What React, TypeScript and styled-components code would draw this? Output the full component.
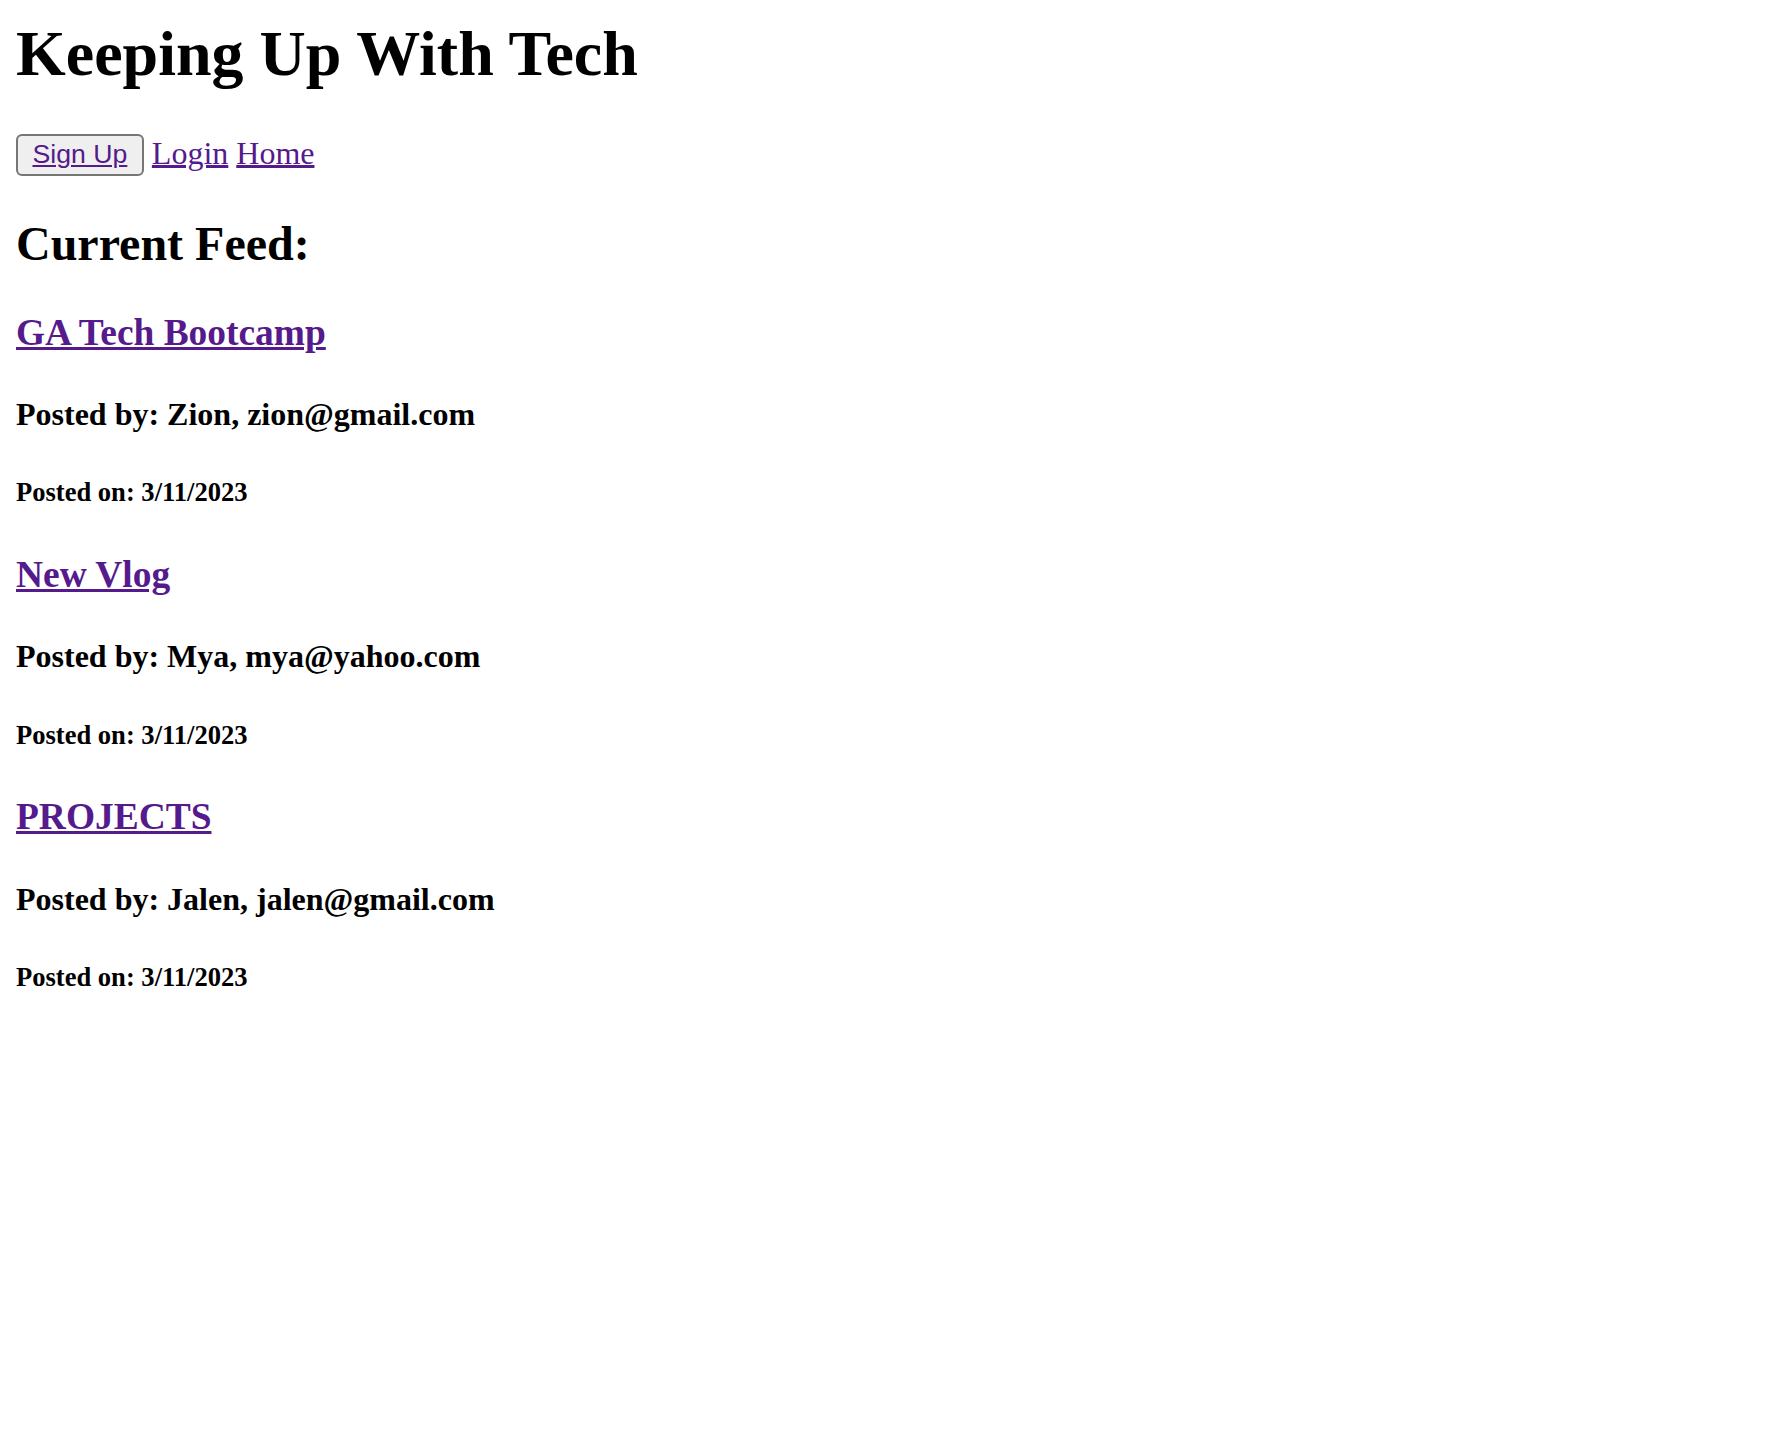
import React, { FC } from 'react';
import styled, { createGlobalStyle } from 'styled-components';

interface Post {
  id: number;
  title: string;
  author: string;
  email: string;
  date: string;
}

const posts: Post[] = [
  { id: 1, title: 'GA Tech Bootcamp', author: 'Zion', email: 'zion@gmail.com', date: '3/11/2023' },
  { id: 2, title: 'New Vlog', author: 'Mya', email: 'mya@yahoo.com', date: '3/11/2023' },
  { id: 3, title: 'PROJECTS', author: 'Jalen', email: 'jalen@gmail.com', date: '3/11/2023' },
];

const GlobalStyle = createGlobalStyle`
  body {
    margin: 17px 16px 16px;
    font-family: "Liberation Serif", "Times New Roman", serif;
    font-size: 32px;
    color: #000;
    background: #fff;
  }
`;

const Header = styled.header``;

const Title = styled.h1`
  font-size: 2em;
  margin: 0 0 0.67em;
`;

const Nav = styled.nav``;

const NavLink = styled.a`
  color: #551a8b;
  text-decoration: underline;
  cursor: pointer;
`;

const NavButton = styled.button`
  height: 42px;
  padding: 0 14.5px;
  border: 2px solid #767676;
  border-radius: 6px;
  background: #efefef;
  font-family: "Liberation Sans", Arial, sans-serif;
  font-size: 26.67px;
  vertical-align: baseline;
  cursor: pointer;

  a {
    color: #551a8b;
    text-decoration: underline;
  }
`;

const FeedTitle = styled.h2`
  font-size: 1.5em;
  margin: 0.83em 0;
`;

const PostItem = styled.article``;

const PostTitle = styled.h3`
  font-size: 1.17em;
  margin: 1em 0;

  a {
    color: #551a8b;
    text-decoration: underline;
  }
`;

const PostMeta = styled.h4<{ small?: boolean }>`
  font-size: ${(p) => (p.small ? '0.83em' : '1em')};
  margin: ${(p) => (p.small ? '1.67em 0' : '1.33em 0')};
`;

const FeedPost: FC<{ post: Post }> = ({ post }) => (
  <PostItem>
    <PostTitle>
      <a href="#">{post.title}</a>
    </PostTitle>
    <PostMeta>
      Posted by: {post.author}, {post.email}
    </PostMeta>
    <PostMeta as="h5" small>
      Posted on: {post.date}
    </PostMeta>
  </PostItem>
);

export default function App() {
  return (
    <>
      <GlobalStyle />
      <Header>
        <Title>Keeping Up With Tech</Title>
        <Nav>
          <NavButton>
            <a href="#">Sign Up</a>
          </NavButton>{' '}
          <NavLink href="#">Login</NavLink> <NavLink href="#">Home</NavLink>
        </Nav>
      </Header>
      <main>
        <FeedTitle>Current Feed:</FeedTitle>
        {posts.map((post) => (
          <FeedPost key={post.id} post={post} />
        ))}
      </main>
    </>
  );
}
